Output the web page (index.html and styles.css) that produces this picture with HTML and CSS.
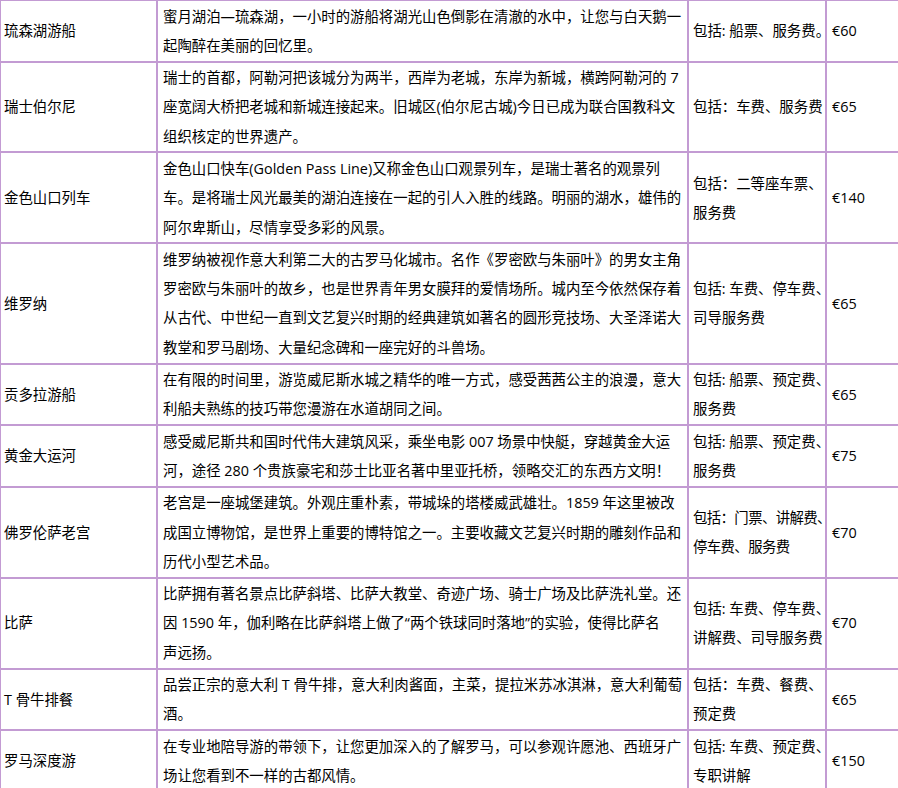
FILE: index.html
```html
<!DOCTYPE html>
<html lang="zh-CN">
<head>
<meta charset="utf-8">
<title>行程项目</title>
<link rel="stylesheet" href="styles.css">
</head>
<body>
<table class="tours">
  <tbody>
    <tr>
      <td class="name">琉森湖游船</td>
      <td class="desc">蜜月湖泊—琉森湖，一小时的游船将湖光山色倒影在清澈的水中，让您与白天鹅一<br>起陶醉在美丽的回忆里。</td>
      <td class="incl tight">包括: 船票、服务费。</td>
      <td class="price">€60</td>
    </tr>
    <tr>
      <td class="name">瑞士伯尔尼</td>
      <td class="desc">瑞士的首都，阿勒河把该城分为两半，西岸为老城，东岸为新城，横跨阿勒河的 7<br>座宽阔大桥把老城和新城连接起来。旧城区(伯尔尼古城)今日已成为联合国教科文<br>组织核定的世界遗产。</td>
      <td class="incl">包括：车费、服务费</td>
      <td class="price">€65</td>
    </tr>
    <tr>
      <td class="name">金色山口列车</td>
      <td class="desc">金色山口快车(Golden Pass Line)又称金色山口观景列车，是瑞士著名的观景列<br>车。是将瑞士风光最美的湖泊连接在一起的引人入胜的线路。明丽的湖水，雄伟的<br>阿尔卑斯山，尽情享受多彩的风景。</td>
      <td class="incl">包括：二等座车票、<br>服务费</td>
      <td class="price">€140</td>
    </tr>
    <tr>
      <td class="name">维罗纳</td>
      <td class="desc">维罗纳被视作意大利第二大的古罗马化城市。名作《罗密欧与朱丽叶》的男女主角<br>罗密欧与朱丽叶的故乡，也是世界青年男女膜拜的爱情场所。城内至今依然保存着<br>从古代、中世纪一直到文艺复兴时期的经典建筑如著名的圆形竞技场、大圣泽诺大<br>教堂和罗马剧场、大量纪念碑和一座完好的斗兽场。</td>
      <td class="incl tight">包括: 车费、停车费、<br>司导服务费</td>
      <td class="price">€65</td>
    </tr>
    <tr>
      <td class="name">贡多拉游船</td>
      <td class="desc">在有限的时间里，游览威尼斯水城之精华的唯一方式，感受茜茜公主的浪漫，意大<br>利船夫熟练的技巧带您漫游在水道胡同之间。</td>
      <td class="incl tight">包括: 船票、预定费、<br>服务费</td>
      <td class="price">€65</td>
    </tr>
    <tr>
      <td class="name">黄金大运河</td>
      <td class="desc">感受威尼斯共和国时代伟大建筑风采，乘坐电影 007 场景中快艇，穿越黄金大运<br>河，途径 280 个贵族豪宅和莎士比亚名著中里亚托桥，领略交汇的东西方文明！</td>
      <td class="incl tight">包括: 船票、预定费、<br>服务费</td>
      <td class="price">€75</td>
    </tr>
    <tr>
      <td class="name">佛罗伦萨老宫</td>
      <td class="desc">老宫是一座城堡建筑。外观庄重朴素，带城垛的塔楼威武雄壮。1859 年这里被改<br>成国立博物馆，是世界上重要的博特馆之一。主要收藏文艺复兴时期的雕刻作品和<br>历代小型艺术品。</td>
      <td class="incl tight condensed">包括：门票、讲解费、<br>停车费、服务费</td>
      <td class="price">€70</td>
    </tr>
    <tr>
      <td class="name">比萨</td>
      <td class="desc">比萨拥有著名景点比萨斜塔、比萨大教堂、奇迹广场、骑士广场及比萨洗礼堂。还<br>因 1590 年，伽利略在比萨斜塔上做了“两个铁球同时落地”的实验，使得比萨名<br>声远扬。</td>
      <td class="incl tight">包括: 车费、停车费、<br>讲解费、司导服务费</td>
      <td class="price">€70</td>
    </tr>
    <tr>
      <td class="name">T 骨牛排餐</td>
      <td class="desc">品尝正宗的意大利 T 骨牛排，意大利肉酱面，主菜，提拉米苏冰淇淋，意大利葡萄<br>酒。</td>
      <td class="incl">包括：车费、餐费、<br>预定费</td>
      <td class="price">€65</td>
    </tr>
    <tr>
      <td class="name">罗马深度游</td>
      <td class="desc">在专业地陪导游的带领下，让您更加深入的了解罗马，可以参观许愿池、西班牙广<br>场让您看到不一样的古都风情。</td>
      <td class="incl tight">包括: 车费、预定费、<br>专职讲解</td>
      <td class="price">€150</td>
    </tr>
  </tbody>
</table>
</body>
</html>
```

FILE: styles.css
```css
html, body {
  margin: 0;
  padding: 0;
  background: #ffffff;
  overflow: hidden;
}

body {
  width: 898px;
  font-family: "Open Sans", "Noto Sans CJK SC", sans-serif;
  font-size: 14.4px;
  line-height: 29.3px;
  color: #000000;
}

.tours {
  border-collapse: separate;
  border-spacing: 0;
  table-layout: fixed;
  width: 917px;
  border-left: 1px solid #c39bd3;
  border-top: 1px solid #c39bd3;
}

.tours td {
  box-sizing: border-box;
  vertical-align: middle;
  padding: 0.5px 4px 0.5px 4px;
  border-right: 2px solid #c39bd3;
  border-bottom: 2px solid #c39bd3;
  white-space: nowrap;
  text-align: left;
}

.tours .name {
  width: 157px;
  padding-left: 3px;
}

.tours .desc {
  width: 531px;
  padding-left: 5px;
}

.tours .incl {
  width: 138px;
}

.tours .price {
  width: 90px;
  padding-left: 5px;
}

.tours .tight {
  text-spacing-trim: trim-all;
}

.tours .condensed {
  letter-spacing: -0.6px;
}
```
